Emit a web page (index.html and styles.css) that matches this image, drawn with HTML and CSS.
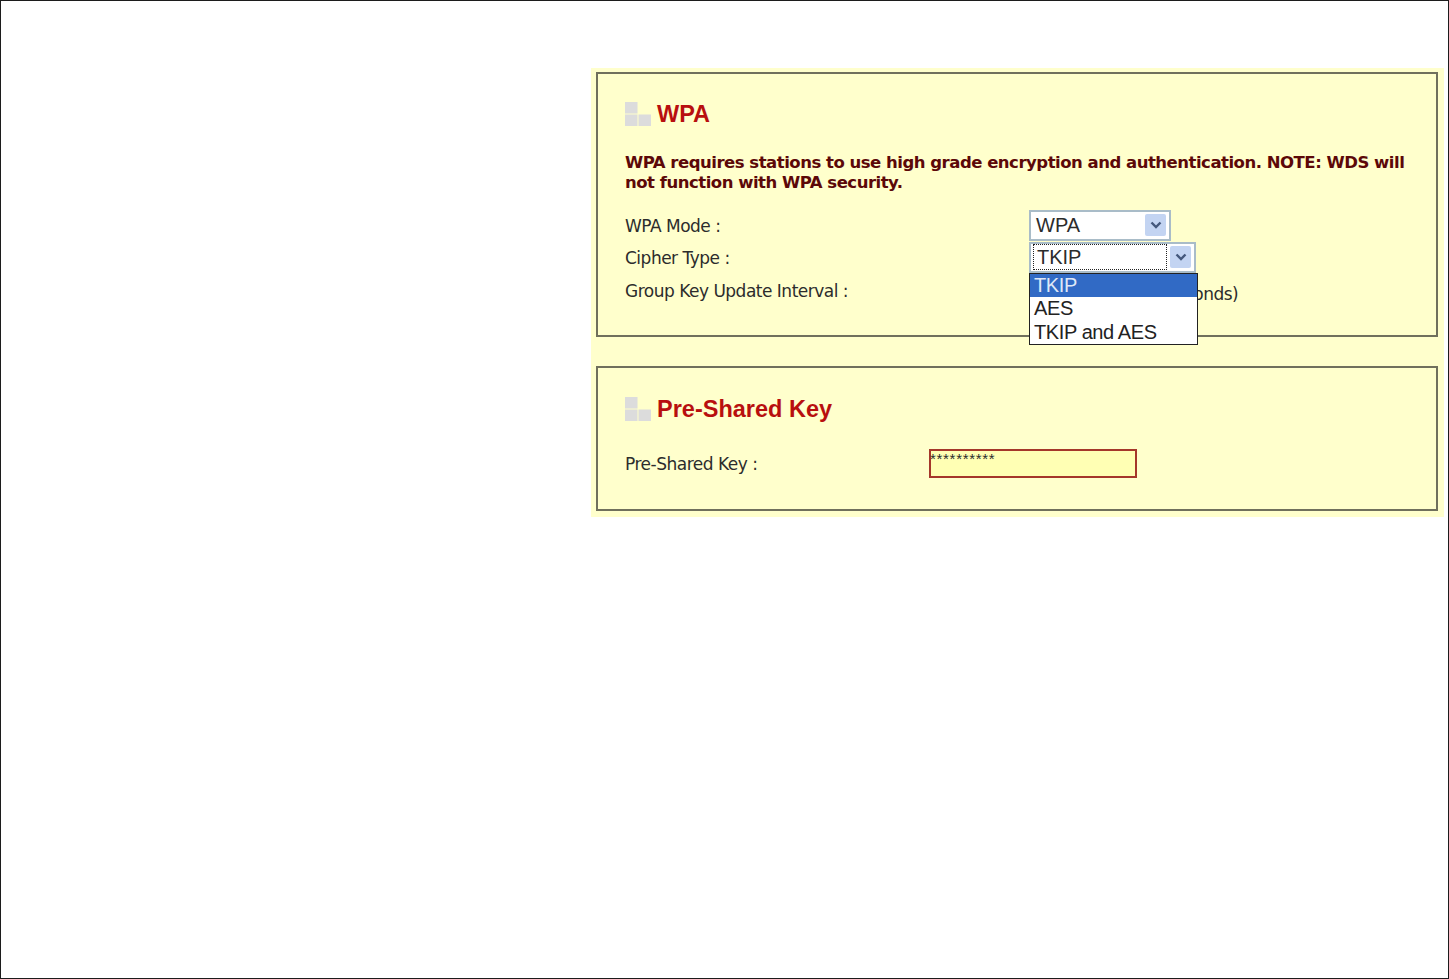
FILE: index.html
```html
<!DOCTYPE html>
<html lang="en">
  <head>
    <meta charset="UTF-8" />
    <title>WPA</title>
    <link rel="stylesheet" href="styles.css">
  </head>
  <body>
    <div class="panel">
      <!-- WPA -->
      <section class="box box-wpa">
        <h2 class="box-title">
          <svg class="title-icon" width="26" height="24" viewBox="0 0 26 24"><path d="M0 0h12.500v11.500H0zM0 12.500h12.500V24H0zM13.500 12.500H26V24H13.500z" fill="#dcdcdc"/></svg>
          WPA
        </h2>
        <p class="note">WPA requires stations to use high grade encryption and authentication. NOTE: WDS will not function with WPA security.</p>
        <div class="field-row">
          <span class="field-label">WPA Mode :</span>
          <div class="select select-mode">
            <span class="select-value">WPA</span>
            <span class="select-arrow"><svg width="12" height="8" viewBox="0 0 12 8"><path d="M1.5 1.5 6 6l4.500-4.500" fill="none" stroke="#44587c" stroke-width="2.400"/></svg></span>
          </div>
        </div>
        <div class="field-row">
          <span class="field-label">Cipher Type :</span>
          <div class="select select-cipher">
            <span class="select-value focused">TKIP</span>
            <span class="select-arrow"><svg width="12" height="8" viewBox="0 0 12 8"><path d="M1.5 1.5 6 6l4.500-4.500" fill="none" stroke="#44587c" stroke-width="2.400"/></svg></span>
            <ul class="select-menu">
              <li class="active">TKIP</li>
              <li>AES</li>
              <li>TKIP and AES</li>
            </ul>
          </div>
        </div>
        <div class="field-row">
          <span class="field-label field-label-low">Group Key Update Interval :</span>
          <span class="field-unit">(seconds)</span>
        </div>
      </section>

      <!-- Pre-Shared Key -->
      <section class="box box-psk">
        <h2 class="box-title">
          <svg class="title-icon" width="26" height="24" viewBox="0 0 26 24"><path d="M0 0h12.500v11.500H0zM0 12.500h12.500V24H0zM13.500 12.500H26V24H13.500z" fill="#dcdcdc"/></svg>
          Pre-Shared Key
        </h2>
        <div class="key-row">
          <span class="key-label">Pre-Shared Key :</span>
          <div class="key-input">**********</div>
        </div>
      </section>
    </div>
  </body>
</html>
```

FILE: styles.css
```css
*{box-sizing:border-box;margin:0;padding:0}
html,body{height:979px;overflow:hidden}
body{background:#fff;border:1px solid #1c1c1c;padding:67px 4px 0 590px;font-family:"DejaVu Sans",sans-serif;color:#2c2c2c}
.panel{background:#ffc;padding:4px 6px 6px 5px;display:flex;flex-direction:column;gap:29px;height:449px}
.box{border:2px solid #70705c;padding:0 27px}
.box-wpa{height:266px;padding-top:27px}
.box-psk{height:145px;padding-top:28px}
.box-title{display:flex;align-items:center;gap:6px;font:bold 23.500px/26px "Liberation Sans",sans-serif;color:#b80f0f}
.note{margin-top:26px;font-size:16.500px;font-weight:bold;line-height:20px;color:#5c0808;letter-spacing:-.49px}
.field-row{display:flex;align-items:center;height:32px;font-size:17px;letter-spacing:-.5px}
.note + .field-row{margin-top:16px}
.field-label{width:404px;flex:none;padding-top:2px}
.field-label-low{padding-top:4px}
.field-unit{margin-left:131px;padding-top:9px}
.select{position:relative;display:flex;align-items:center;background:#fff;border:2px solid #a9bcc8;height:31px;font:20px "Liberation Sans",sans-serif;letter-spacing:0}
.select-mode{width:142px}
.select-cipher{width:167px}
.select-value{flex:1;padding-left:5px}
.select-value.focused{height:26px;margin-left:2px;padding-left:3px;line-height:24px;border:1px dotted #222}
.select-arrow{display:flex;align-items:center;justify-content:center;width:21px;height:22px;margin:0 3px 0 3px;background:#c3d4f2;border-radius:2px}
.select-menu{position:absolute;left:-2px;top:29px;width:169px;list-style:none;background:#fff;border:1px solid #222;z-index:2;letter-spacing:-.4px}
.select-menu li{height:23.500px;padding-left:4px;line-height:23px;color:#222}
.select-menu li.active{background:#316ac5;color:#dfe8f7}
.key-row{display:flex;align-items:center;margin-top:27px;height:29px}
.key-label{width:304px;flex:none;font-size:17px;letter-spacing:-.5px}
.key-input{width:208px;height:29px;border:2px solid #a5372a;background:#ffffb4;font:15px/15px "Liberation Sans",sans-serif;letter-spacing:.7px;text-indent:-1px}
```
